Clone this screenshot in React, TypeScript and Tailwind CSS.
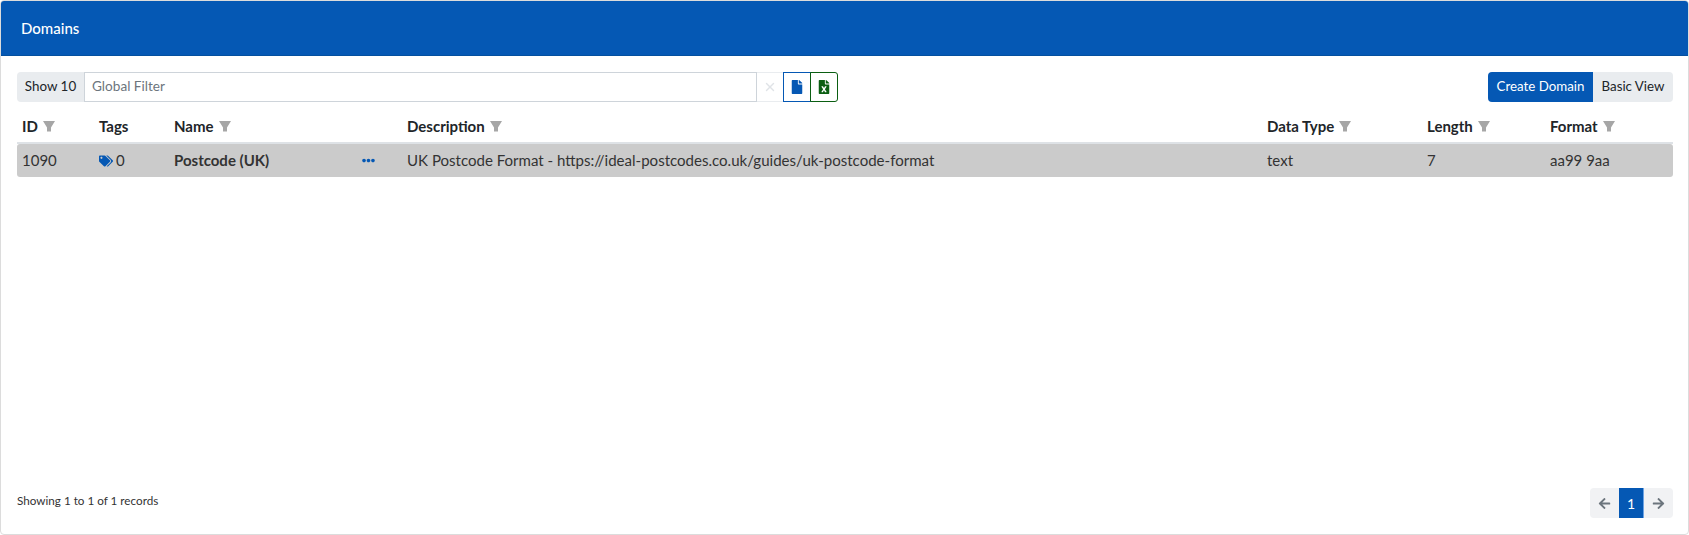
import { X } from "lucide-react";
import { FaArrowLeft, FaArrowRight, FaEllipsisH, FaFile, FaFileExcel, FaTags } from "react-icons/fa";

const columns = "grid grid-cols-[77px_75px_233px_860px_160px_123px_1fr]";

function Funnel() {
  return (
    <svg width="12" height="11" viewBox="0 0 12 11" className="shrink-0 text-[#a6a6a6]">
      <path d="M0 0H12L8 6.5V10.5H4V6.5Z" fill="currentColor" />
    </svg>
  );
}

function Head({ label, filter = true }: { label: string; filter?: boolean }) {
  return (
    <div className="flex items-center gap-[5px] pb-[1px] pl-[5px] text-[15px] font-bold text-[#212529]">
      <span>{label}</span>
      {filter && <Funnel />}
    </div>
  );
}

export default function App() {
  return (
    <div className="h-[535px] w-[1689px] bg-white font-['Lato',sans-serif] text-[#212529]">
      <div className="flex h-[535px] flex-col rounded-[4px] border border-[#dcdcdc] bg-white">
        <div className="flex h-[55px] shrink-0 items-center rounded-t-[3px] border-b border-[#04509f] bg-[#0558b4] pl-[20px] text-[15px] font-medium text-white">
          Domains
        </div>
        <div className="flex flex-1 flex-col pb-[16px] pl-[16px] pr-[15px] pt-[16px]">
          <div className="flex h-[30px] items-stretch justify-between">
            <div className="flex items-stretch">
              <div className="flex w-[67px] items-center justify-center rounded-l-[4px] bg-[#e9ecef] pb-[1px] text-[13.4px]">Show 10</div>
              <div className="flex w-[673px] items-center border border-[#ced4da] pb-[1px] pl-[7px] text-[13.6px] text-[#6c757d]">Global Filter</div>
              <div className="flex w-[26px] items-center justify-center border-y border-[#e9ecef] text-[#e0e3e7]">
                <X size={14} strokeWidth={2.5} />
              </div>
              <div className="flex w-[28px] items-center justify-center border border-[#0558b4] text-[#0558b4]">
                <FaFile className="text-[14px]" />
              </div>
              <div className="-ml-px flex w-[28px] items-center justify-center rounded-r-[3px] border border-[#0b5e12] text-[#0b5e12]">
                <FaFileExcel className="text-[14px]" />
              </div>
            </div>
            <div className="flex items-stretch text-[13.3px]">
              <div className="flex w-[105px] items-center justify-center rounded-l-[4px] bg-[#0558b4] pb-[1px] text-white">Create Domain</div>
              <div className="flex w-[80px] items-center justify-center rounded-r-[4px] bg-[#e9ecef] pb-[1px]">Basic View</div>
            </div>
          </div>
          <div className={`${columns} mt-[10px] h-[32px] items-center border-b-2 border-[#dee2e6]`}>
            <Head label="ID" />
            <Head label="Tags" filter={false} />
            <Head label="Name" />
            <Head label="Description" />
            <Head label="Data Type" />
            <Head label="Length" />
            <Head label="Format" />
          </div>
          <div className={`${columns} h-[33px] items-center rounded-[3px] bg-[#cbcbcb] text-[15px] text-[#333]`}>
            <div className="pl-[5px]">1090</div>
            <div className="flex items-center gap-[3px] pl-[5px]">
              <FaTags className="text-[14px] text-[#0558b4]" />
              <span>0</span>
            </div>
            <div className="flex items-center justify-between pl-[5px] pr-[27px]">
              <span className="font-bold">Postcode (UK)</span>
              <FaEllipsisH className="text-[13px] text-[#0558b4]" />
            </div>
            <div className="pl-[5px] text-[15.05px]">UK Postcode Format - https://ideal-postcodes.co.uk/guides/uk-postcode-format</div>
            <div className="pl-[5px]">text</div>
            <div className="pl-[5px]">7</div>
            <div className="pl-[5px]">aa99 9aa</div>
          </div>
          <div className="mt-auto flex h-[30px] items-center justify-between">
            <div className="pb-[4px] text-[11.7px] text-[#333]">Showing 1 to 1 of 1 records</div>
            <div className="flex h-[30px] items-stretch text-[14px]">
              <div className="flex w-[29px] items-center justify-center rounded-l-[4px] bg-[#f1f2f4] text-[#6c757d]">
                <FaArrowLeft className="text-[13px]" />
              </div>
              <div className="flex w-[25px] items-center justify-center border-r border-[#6ea4e4] bg-[#0558b4] text-white">1</div>
              <div className="flex w-[29px] items-center justify-center rounded-r-[4px] bg-[#f1f2f4] text-[#6c757d]">
                <FaArrowRight className="text-[13px]" />
              </div>
            </div>
          </div>
        </div>
      </div>
    </div>
  );
}
